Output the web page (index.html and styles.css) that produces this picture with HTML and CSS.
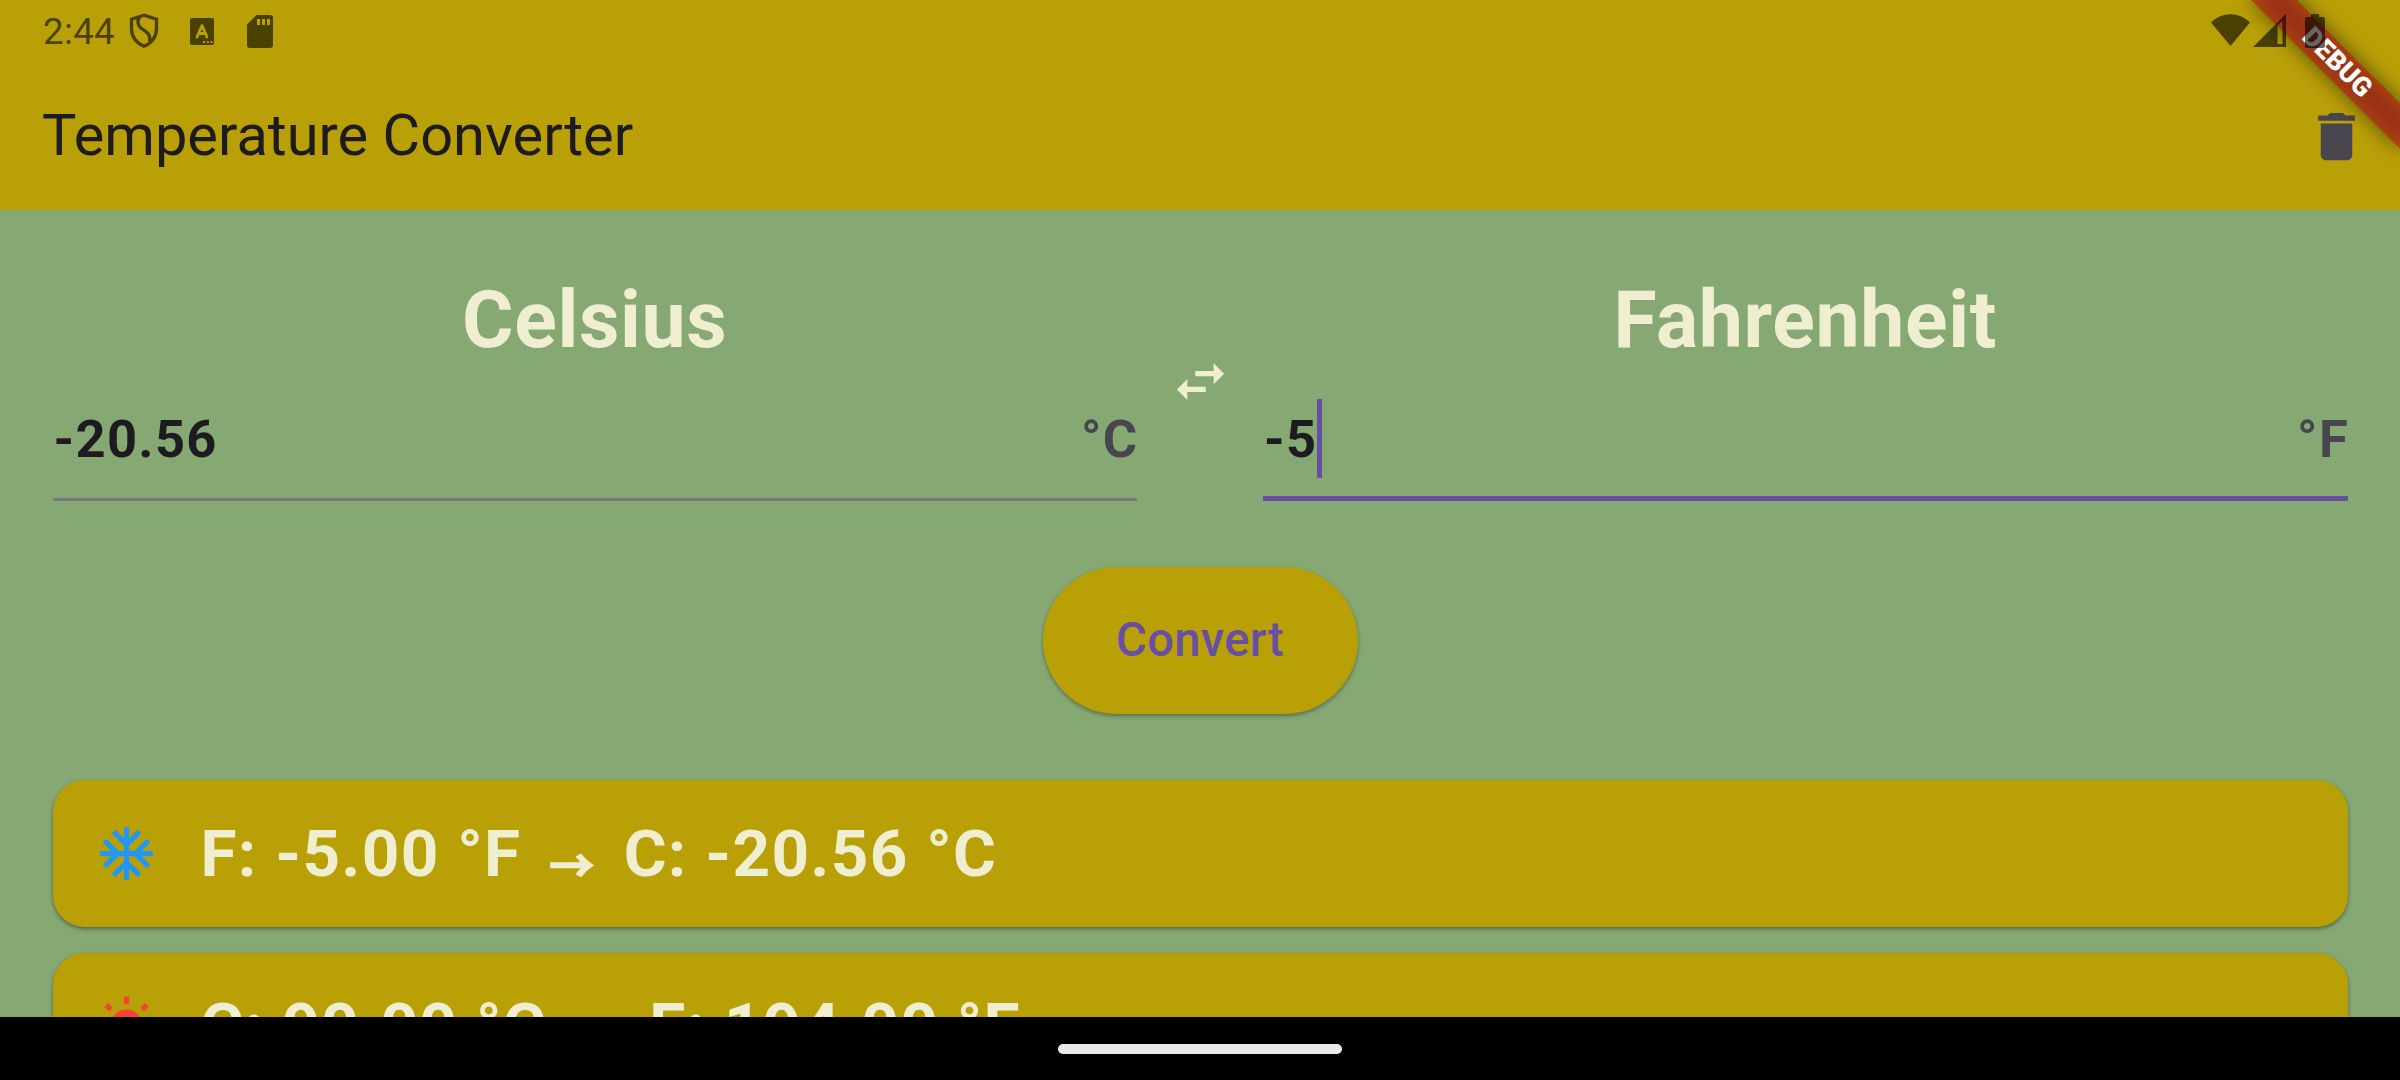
FILE: index.html
```html
<!DOCTYPE html>
<html lang="en">
<head>
<meta charset="utf-8">
<title>Temperature Converter</title>
<link rel="stylesheet" href="styles.css">
</head>
<body>
<div class="screen">
  <header class="header">
    <div class="status-bar">
      <div class="status-left">
        <span class="clock">2:44</span>
        <svg class="shield" viewBox="0 0 30 36"><path d="M15 2.200 2.500 6.300V16c0 8 5.200 14.500 12.500 17.200C22.300 30.500 27.500 24 27.500 16V6.300Z M11 3.800C7.500 8 8.500 12.500 12.500 15.500S22 20.500 20.500 28"/></svg>
        <svg class="input-icon" viewBox="0 0 24 27"><path fill-rule="evenodd" d="M2 0H22Q24 0 24 2V25Q24 27 22 27H2Q0 27 0 25V2Q0 0 2 0ZM13 23v2h2v-2zM16.800 23v2h2v-2zM20.500 23v2h2v-2z"/><path class="input-mark" d="m7 19 5-11.500L17 19M8.500 15.500h7"/></svg>
        <svg class="sd-icon" viewBox="0 0 26 33"><path fill-rule="evenodd" d="M9.500 0H23Q26 0 26 3V30Q26 33 23 33H3Q0 33 0 30V9.500ZM10 4v6h3V4zM15 4v6h3V4zM20 4v6h3V4z"/></svg>
      </div>
      <div class="status-right">
        <svg class="wifi" viewBox="0 0 39 32"><path d="M0 8.500C11-2.500 28-2.500 39 8.500L19.500 32Z"/></svg>
        <svg class="signal" viewBox="0 0 33 33"><path fill-rule="evenodd" d="M33 0V33H0ZM24.500 11.500V30H29.500V7Z"/></svg>
        <svg class="battery" viewBox="0 0 20 34"><path d="M6 0h8v3h4q2 0 2 2v27q0 2-2 2H2q-2 0-2-2V5q0-2 2-2h4Z"/></svg>
      </div>
    </div>
    <div class="toolbar">
      <h1 class="title">Temperature Converter</h1>
      <svg class="icon delete" viewBox="0 0 24 24"><path d="M6 19c0 1.100.9 2 2 2h8c1.100 0 2-.9 2-2V7H6v12zM19 4h-3.500l-.71-.71c-.18-.18-.44-.29-.7-.29H9.910c-.26 0-.52.110-.7.290L8.500 4H5v2h14V4z"/></svg>
    </div>
  </header>
  <main class="content">
    <section class="fields">
      <div class="column">
        <h2 class="heading">Celsius</h2>
        <div class="field"><span class="value">-20.56</span><span class="unit">°C</span></div>
      </div>
      <svg class="icon swap" viewBox="0 0 24 24"><path d="M6.990 11 3 15l3.990 4v-3H14v-2H6.990v-3zM21 9l-3.990-4v3H10v2h7.010v3L21 9z"/></svg>
      <div class="column">
        <h2 class="heading">Fahrenheit</h2>
        <div class="field focused"><span class="value">-5</span><span class="caret"></span><span class="unit">°F</span></div>
      </div>
    </section>
    <button class="convert">Convert</button>
    <section class="history">
      <article class="card">
        <svg class="icon cold" viewBox="0 0 24 24"><path d="M22 11h-4.170l3.240-3.240-1.410-1.420L15 11h-2V9l4.660-4.660-1.420-1.410L13 6.170V2h-2v4.170L7.760 2.930 6.340 4.340 11 9v2H9L4.340 6.340 2.930 7.760 6.170 11H2v2h4.170l-3.240 3.240 1.410 1.420L9 13h2v2l-4.660 4.660 1.420 1.410L11 17.830V22h2v-4.170l3.240 3.240 1.420-1.410L13 15v-2h2l4.660 4.660 1.410-1.420L17.830 13H22z"/></svg>
        <span>F: -5.00 °F <span class="arrow">→</span> C: -20.56 °C</span>
      </article>
      <article class="card">
        <svg class="icon hot" viewBox="0 0 24 24"><path d="M6.760 4.840l-1.800-1.790-1.410 1.410 1.790 1.790 1.420-1.410zM4 10.500H1v2h3v-2zm9-9.950h-2V3.500h2V.55zm7.450 3.910l-1.410-1.410-1.790 1.790 1.410 1.410 1.790-1.790zm-3.210 13.700l1.790 1.800 1.410-1.410-1.800-1.790-1.400 1.400zM20 10.500v2h3v-2h-3zm-8-5c-3.310 0-6 2.690-6 6s2.690 6 6 6 6-2.690 6-6-2.690-6-6-6z"/></svg>
        <span>C: 90.00 °C <span class="arrow">→</span> F: 194.00 °F</span>
      </article>
    </section>
  </main>
  <footer class="nav-bar"><div class="handle"></div></footer>
  <div class="banner"><span class="banner-text">DEBUG</span></div>
</div>
</body>
</html>
```
FILE: styles.css
```css
:root {
  --gold: #baa007;
  --green: #86a974;
  --cream: #efeed0;
  --ink: #1d1b20;
  --muted: #49454f;
  --purple: #6750a4;
}
* { box-sizing: border-box; }
body { margin: 0; font-family: Roboto, "Liberation Sans", sans-serif; }
h1, h2 { margin: 0; }
svg { display: block; flex: none; }
.screen {
  position: relative;
  display: flex;
  flex-direction: column;
  width: 2400px;
  height: 1080px;
  overflow: hidden;
  background: var(--green);
}
.header { flex: none; height: 210px; background: var(--gold); }
.status-bar {
  position: relative;
  z-index: 2;
  display: flex;
  justify-content: space-between;
  height: 63px;
  padding: 0 75px 0 43px;
  fill: rgba(0, 0, 0, .6);
}
.status-left, .status-right { display: flex; align-items: flex-start; }
.clock { width: 86px; font-size: 36.75px; line-height: 63px; letter-spacing: .3px; color: rgba(0, 0, 0, .6); }
.shield { width: 30px; height: 36px; margin-top: 13px; fill: none; stroke: #4a4003; stroke-width: 3.3; }
.input-icon { width: 24px; height: 27px; margin: 18px 0 0 31px; }
.input-mark { fill: none; stroke: var(--gold); stroke-width: 2.8; stroke-linecap: round; stroke-linejoin: round; }
.sd-icon { width: 26px; height: 33px; margin: 15px 0 0 33px; }
.wifi { width: 39px; height: 32px; margin-top: 14px; }
.signal { width: 33px; height: 33px; margin: 14px 0 0 3px; }
.battery { width: 20px; height: 34px; margin: 14px 0 0 19px; }
.toolbar {
  display: flex;
  align-items: center;
  justify-content: space-between;
  height: 147px;
  padding: 0 32px 1px 42px;
}
.title { font-size: 57.75px; font-weight: 400; line-height: 73.5px; color: var(--ink); }
.icon { width: 63px; height: 63px; }
.delete { fill: var(--muted); }
.content { flex: 1; min-height: 0; overflow: hidden; padding: 52.5px 52.5px 0; }
.fields { display: flex; align-items: center; }
.column { flex: 1; }
.swap { margin: 0 31.5px; fill: var(--cream); }
.heading {
  height: 112.5px;
  padding-top: 1px;
  font-size: 78.75px;
  font-weight: 700;
  line-height: 112.5px;
  letter-spacing: .65px;
  text-align: center;
  color: var(--cream);
}
.field {
  display: flex;
  align-items: center;
  height: 126px;
  padding: 4px 0 0 1px;
  border-bottom: 3px solid #7b757f;
  font-size: 52.5px;
  font-weight: 700;
  letter-spacing: 1.31px;
  color: var(--ink);
}
.field.focused { padding-top: 6px; border-bottom: 5.250px solid var(--purple); }
.caret { width: 5px; height: 79px; background: var(--purple); }
.unit { margin: 0 -1.5px 0 auto; color: var(--muted); }
.convert {
  display: block;
  width: 315px;
  height: 147px;
  margin: 66px auto;
  padding: 0 0 2px;
  border: 0;
  border-radius: 73.5px;
  background: var(--gold);
  box-shadow: 0 2px 4px rgba(0, 0, 0, .35);
  font: 500 47.25px Roboto, sans-serif;
  letter-spacing: .26px;
  color: var(--purple);
}
.history { display: flex; flex-direction: column; gap: 26px; }
.card {
  display: flex;
  align-items: center;
  gap: 43px;
  height: 147px;
  padding: 0 42px;
  border-radius: 31.5px;
  background: var(--gold);
  box-shadow: 0 2px 4px rgba(0, 0, 0, .4);
  font-size: 65.625px;
  font-weight: 700;
  letter-spacing: 1.31px;
  white-space: pre;
  color: var(--cream);
}
.cold { fill: #2196f3; }
.hot { fill: #f44336; }
.arrow {
  position: relative;
  top: 7px;
  display: inline-block;
  width: 67px;
  font-family: "Noto Sans CJK SC", sans-serif;
  font-size: 45px;
  line-height: 1;
  text-align: center;
  -webkit-text-stroke: 1.5px var(--cream);
}
.nav-bar { position: relative; z-index: 1; display: flex; justify-content: center; flex: none; height: 63px; padding-top: 27px; background: #000; }
.handle { width: 284px; height: 10px; border-radius: 5px; background: #ebebeb; }
.banner {
  position: absolute;
  z-index: 1;
  top: 46.5px;
  left: 2232px;
  width: 210px;
  height: 31.5px;
  transform: rotate(45deg);
}
.banner::before, .banner::after { content: ""; position: absolute; inset: 0; }
.banner::before { background: rgba(0, 0, 0, .5); filter: blur(10.4px); }
.banner::after { background: rgba(183, 28, 28, .627); }
.banner-text {
  position: absolute;
  z-index: 1;
  inset: 0;
  font-size: 26.8px;
  font-weight: 900;
  line-height: 31.5px;
  text-align: center;
  color: #fff;
}
```
